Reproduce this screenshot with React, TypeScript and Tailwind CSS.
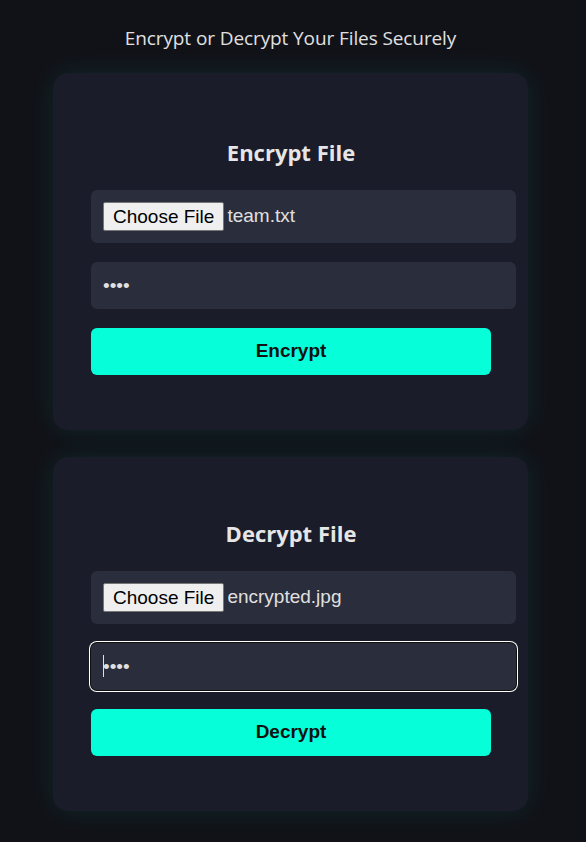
import React from "react"

type CardProps = {
  title: string
  fileName: string
  action: string
  focused?: boolean
  topPad: string
}

const FileRow = ({ fileName }: { fileName: string }) => (
  <div className="flex items-center w-[425px] h-[53px] px-[12px] rounded-[6px] bg-[#2a2d3b]">
    <button
      type="button"
      className="h-[29px] px-[9px] bg-[#efefef] border border-[#767676] rounded-[2px] text-[19px] leading-none text-black font-['Liberation_Sans',Arial,sans-serif]"
    >
      Choose File
    </button>
    <span className="ml-[3px] text-[19px] text-[#e0e0e0] font-['Liberation_Sans',Arial,sans-serif]">
      {fileName}
    </span>
  </div>
)

const PasswordInput = ({ focused }: { focused?: boolean }) => (
  <div className="relative mt-[19px]">
    <input
      type="password"
      readOnly
      defaultValue="1234"
      className={
        "block w-[425px] h-[47px] px-[12px] rounded-[6px] bg-[#2a2d3b] text-[#e0e0e0] text-[19px] outline-none font-['Liberation_Sans',Arial,sans-serif] " +
        (focused ? "shadow-[0_0_0_1px_#101010,0_0_0_2px_#ffffff]" : "")
      }
    />
    {focused && (
      <span className="absolute left-[12px] top-[12px] w-px h-[22px] bg-[#e0e0e0]" />
    )}
  </div>
)

const Card = ({ title, fileName, action, focused, topPad }: CardProps) => (
  <div
    className={
      "w-[475px] pl-[38px] pr-[37px] pb-[55px] rounded-[15px] bg-[#1b1c29] shadow-[0_0_28px_rgba(6,255,216,0.09)] " +
      topPad
    }
  >
    <h2 className="text-center text-[22px] leading-[30px] font-bold text-[#e6e6e6] font-['Open_Sans',sans-serif]">
      {title}
    </h2>
    <div className="mt-[23px]">
      <FileRow fileName={fileName} />
      <PasswordInput focused={focused} />
      <button
        type="button"
        className="mt-[19px] w-[400px] h-[47px] rounded-[6px] bg-[#06ffd9] text-[19px] font-bold text-[#111111] font-['Liberation_Sans',Arial,sans-serif]"
      >
        {action}
      </button>
    </div>
  </div>
)

export default function App() {
  return (
    <div className="min-h-screen bg-[#111218] flex flex-col items-center pr-[5px] pb-[30px]">
      <h3 className="mt-[23px] text-[19px] leading-[30px] tracking-[-0.1px] text-[#e0e0e0] font-['Open_Sans',sans-serif]">
        Encrypt or Decrypt Your Files Securely
      </h3>
      <div className="mt-[20px] flex flex-col gap-[27px]">
        <Card title="Encrypt File" fileName="team.txt" action="Encrypt" topPad="pt-[64px]" />
        <Card
          title="Decrypt File"
          fileName="encrypted.jpg"
          action="Decrypt"
          focused
          topPad="pt-[61px]"
        />
      </div>
    </div>
  )
}
